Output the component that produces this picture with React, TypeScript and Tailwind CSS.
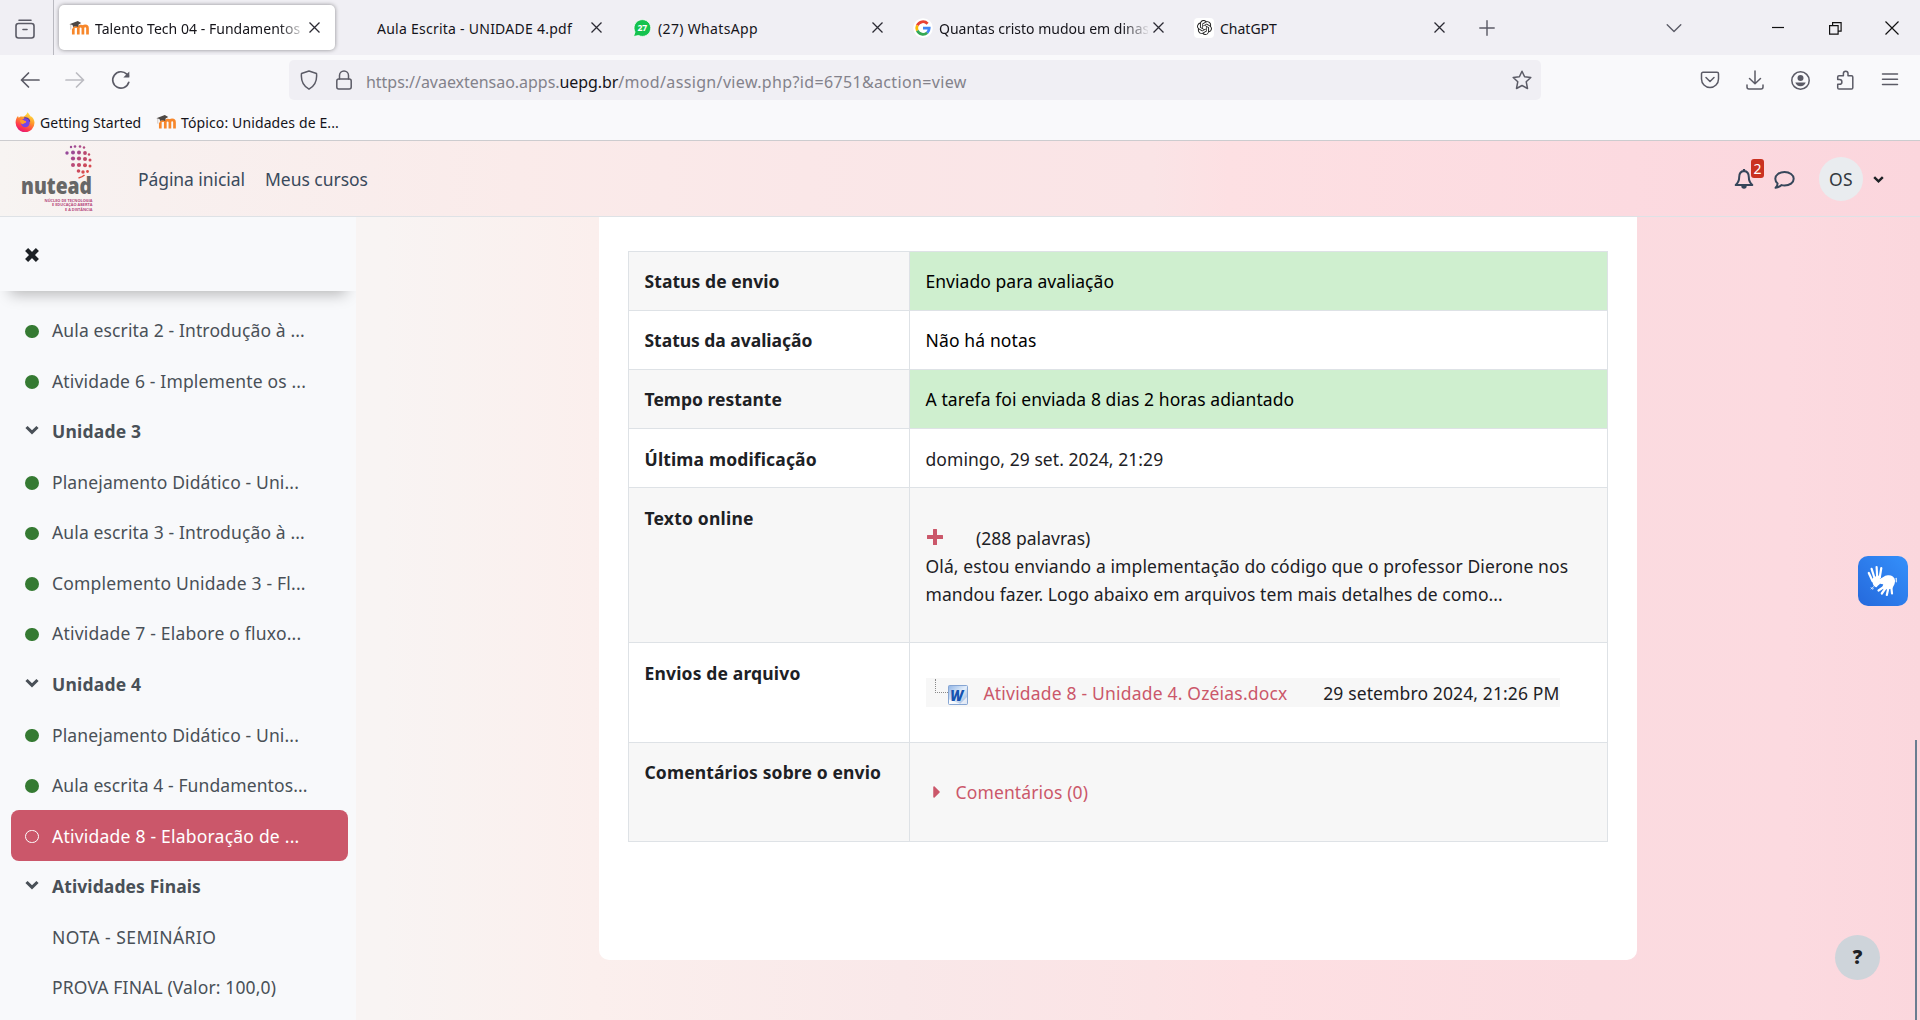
import type { ReactNode } from "react";
import { FaCaretRight } from "react-icons/fa";
import { SiOpenai } from "react-icons/si";

/* ---------- Icons ---------- */

function MoodleIcon() {
  return (
    <svg viewBox="0 0 20 20" className="size-5 shrink-0">
      <path d="M4.2 16V10.6M9.2 16V10.2a2.3 2.3 0 0 1 4.6-.4V16M13.8 16V9.8a2.3 2.3 0 0 1 4.6 0V16" transform="translate(0.1 .4)" fill="none" stroke="#f7872b" strokeWidth="2.7" />
      <path d="M4.2 11.2a3 3 0 0 1 4.6-1.8" fill="none" stroke="#f7872b" strokeWidth="2" />
      <path d="M.4 6.3 8.8 3l3.4 2-2.6 1.4-.5 2.6c-1.6-1.2-3.5-1-5-.1L3.5 7z" fill="#4c4744" />
      <path d="M1.8 6.6v5" stroke="#bfb3aa" strokeWidth=".7" />
    </svg>
  );
}

function WhatsAppIcon() {
  return (
    <svg viewBox="0 0 20 20" className="size-5 shrink-0">
      <path d="M1.5 18.5 3 14A8.4 8.4 0 1 1 6.6 17.5z" fill="#14c24e" stroke="#fff" strokeWidth=".8" />
      <text x="10.3" y="13" textAnchor="middle" fontSize="8.6" fontWeight="700" fill="#fff" fontFamily="Open Sans, sans-serif">27</text>
    </svg>
  );
}

function GoogleIcon() {
  return (
    <svg viewBox="0 0 20 20" className="size-5 shrink-0">
      <circle cx="10" cy="10" r="9.8" fill="#fff" />
      <g fill="none" strokeWidth="2.8">
        <path d="M14.6 5.700A6.300 6.300 0 0 0 4.300 7.300" stroke="#ea4335" />
        <path d="M4.300 7.300a6.300 6.300 0 0 0 0 5.400" stroke="#fbbc05" />
        <path d="M4.300 12.700a6.300 6.300 0 0 0 9.900 2" stroke="#34a853" />
        <path d="M14.200 14.700A6.300 6.300 0 0 0 16.200 10.200H10" stroke="#4285f4" />
      </g>
    </svg>
  );
}

function ChatGptIcon() {
  return (
    <span className="flex size-5 items-center justify-center rounded-[4px] bg-white">
      <SiOpenai className="size-[15px] text-[#222]" />
    </span>
  );
}

function FirefoxIcon() {
  return (
    <svg viewBox="0 0 20 20" className="size-5 shrink-0">
      <defs>
        <linearGradient id="ff" x1=".8" y1="0" x2=".3" y2="1">
          <stop offset="0" stopColor="#fff04a" />
          <stop offset=".4" stopColor="#ff9a2a" />
          <stop offset=".75" stopColor="#ff3c4a" />
          <stop offset="1" stopColor="#e3127c" />
        </linearGradient>
      </defs>
      <path d="M12.500.3c1.200 1.600 2.500 2.700 3.200 4.200 1-.2 3.800 2.400 3.800 6.300a9.400 9.400 0 0 1-18.900 0C.6 8 1.500 5.600 3 4l.7 1.800C5 4.600 6 4.300 7.500 4.600 9.500 4.900 11.500 3 12.500.3z" fill="url(#ff)" />
      <circle cx="10.3" cy="10.8" r="4.4" fill="#7543e8" />
      <path d="M5 8.200c2-.9 3.600-.3 4.600.6 1.200 0 1.800.7 1.500 1.400-1 1.400-2.600.8-3.300 2-1.800-.5-2.800-2-2.800-4z" fill="#ff9a2a" />
      <path d="M9 6c3-.8 5.300 1 5.700 3.600" fill="none" stroke="#4b2fb5" strokeWidth="1.2" />
    </svg>
  );
}

function Stroke({ d, size = "size-5", w = 1.5, color = "#5b5b66", children }: { d?: string; size?: string; w?: number; color?: string; children?: ReactNode }) {
  return (
    <svg viewBox="0 0 20 20" className={`${size} shrink-0`} fill="none" stroke={color} strokeWidth={w} strokeLinecap="round" strokeLinejoin="round">
      {d && <path d={d} />}
      {children}
    </svg>
  );
}

function CloseIcon() {
  return (
    <svg viewBox="0 0 11 11" className="size-[11px] shrink-0" stroke="#2b2a33" strokeWidth="1.3">
      <path d="M.5.5 10.5 10.5M10.5.5.5 10.5" />
    </svg>
  );
}

function Chevron({ className }: { className: string }) {
  return (
    <svg viewBox="0 0 14 14" className={className} fill="none" stroke="currentColor" strokeWidth="3.1">
      <path d="M1.500 4 7 9.400 12.500 4" />
    </svg>
  );
}

function Cross() {
  return (
    <svg viewBox="0 0 14 14" className="size-[14px]" stroke="#1d2125" strokeWidth="4.300" strokeLinecap="butt">
      <path d="M1.600 1.600 12.400 12.400M12.400 1.600 1.600 12.400" strokeLinejoin="round" />
    </svg>
  );
}

function Plus() {
  return (
    <svg viewBox="0 0 16 16" className="size-4" fill="#cb576a">
      <path d="M6.500 0h3a.5.5 0 0 1 .5.5V6h5.500a.5.5 0 0 1 .5.5v3a.5.5 0 0 1-.5.5H10v5.500a.5.5 0 0 1-.5.5h-3a.5.5 0 0 1-.5-.5V10H.5a.5.500 0 0 1-.5-.5v-3A.5.5 0 0 1 .5 6H6V.5a.5.5 0 0 1 .5-.5z" />
    </svg>
  );
}

function Bell() {
  return (
    <svg viewBox="0 0 20 20" className="size-5" fill="none" stroke="#36465a" strokeWidth="2" strokeLinejoin="round">
      <path d="M10 2C6.500 2.300 5.200 5 5.200 8c0 4-1.300 6-3.500 8h16.600c-2.200-2-3.500-4-3.500-8 0-3-1.300-5.700-4.800-6z" />
      <path d="M10 0v2" strokeWidth="2.200" />
      <path d="M7.300 17a2.700 2.700 0 0 0 5.400 0z" fill="#36465a" stroke="none" />
    </svg>
  );
}

function Bubble() {
  return (
    <svg viewBox="0 0 22 18" className="h-[18px] w-[22px]" fill="none" stroke="#36465a" strokeWidth="2" strokeLinejoin="round">
      <path d="M11.500 1.100c5.200 0 9.200 2.900 9.200 6.700s-4 6.700-9.200 6.700c-1 0-2-.1-2.900-.4-1.600 1.500-3.400 2.400-6 2.700 1.300-1.400 1.900-2.700 2-4.300-1.500-1.200-2.300-2.800-2.300-4.700 0-3.800 4-6.700 9.200-6.700z" />
    </svg>
  );
}

function NuteadLogo() {
  const dots: [number, number, number, string][] = [
    [50, 2, 1.2, "#9c4a94"], [54, 1.5, 1.3, "#a14a90"], [59, 1.5, 1.3, "#a94a88"], [63, 2.5, 1.2, "#b24a80"],
    [46, 8, 1.7, "#97499a"], [52, 7.5, 2, "#9c4a94"], [58, 7.5, 2, "#a94a88"], [64, 8, 1.9, "#b9486f"], [68, 9.5, 1.2, "#c44a68"],
    [52, 13.5, 2.1, "#a8488a"], [58, 13.5, 2.1, "#b4487a"], [64, 14, 2, "#c04a68"], [69, 15, 1.5, "#cc4a5c"],
    [52, 20, 2, "#b94a78"], [58, 20, 2.1, "#c2496a"], [64, 20.3, 2, "#cc4a5c"], [69, 21, 1.5, "#d64b50"],
    [57.5, 26, 1.8, "#cc4a5c"], [62, 27, 1.7, "#d64b50"], [66.5, 26.5, 1.4, "#de4c48"],
  ];
  return (
    <svg viewBox="-4 0 80 72" className="h-[72px] w-[80px] shrink-0">
      {dots.map(([x, y, r, c]) => <circle key={`${x}-${y}`} cx={x} cy={y} r={r} fill={c} />)}
      <path d="M57.5 33c2-.5 4.500-1.500 6-3" stroke="#e04c40" strokeWidth="1.5" fill="none" />
      <text x="0" y="48.500" fontSize="22" fontWeight="800" textLength="71" lengthAdjust="spacingAndGlyphs" fill="#676767" fontFamily="Open Sans, sans-serif">nutead</text>
      <g fontSize="4.2" fontWeight="700" fill="#b5487c" fontFamily="Open Sans, sans-serif">
        <text x="23.500" y="56.5" textLength="48" lengthAdjust="spacingAndGlyphs">NÚCLEO DE TECNOLOGIA</text>
        <text x="31" y="61" textLength="40.500" lengthAdjust="spacingAndGlyphs">E EDUCAÇÃO ABERTA</text>
        <text x="44" y="65.5" textLength="27.500" lengthAdjust="spacingAndGlyphs">E A DISTÂNCIA</text>
      </g>
    </svg>
  );
}

function HandsIcon() {
  return (
    <svg viewBox="0 0 50 50" className="size-[50px]" stroke="#fff" strokeLinecap="round" strokeLinejoin="round" fill="none">
      <path d="M14.500 25 10.800 17M16.500 22 13.600 12.800M19.200 21 18.600 11M21.800 21 23.300 12" strokeWidth="2.200" />
      <path d="M14.800 23.500c2-3 6-3.500 7.500-2.500l-2 2.500-1.300 1.500 3 2-3 2.500-.8 1c-2-.8-3.200-3.500-3.400-7z" fill="#fff" strokeWidth="1.500" />
      <path d="M25 31.500 20.500 34.500M27.300 32.500 23.800 37.500M30.300 32.500 28.800 39M33.300 31 34 37.500" strokeWidth="2.200" />
      <path d="M19.800 23.800c4 .8 6-3.200 9.500-3.700 4-.7 7.200 1.500 7 4.800 0 3-1.400 4.500-2.500 7l-5 .5-4-.5 1.500-4.500c-2.500.3-5.500-1-6.500-3.600z" fill="#fff" strokeWidth="1.500" />
      <path d="M13 31.500l1.500 1.500M15.500 30.500l-2.500 2.500M15.500 32l-.8 1.200" strokeWidth="1" opacity=".7" />
      <path d="M38.300 22.300v3.500" strokeWidth="1.300" opacity=".8" />
    </svg>
  );
}

/* ---------- Browser window ---------- */

function Tab({ icon, title, track, active, fade }: { icon?: ReactNode; title: string; track: string; active?: boolean; fade?: boolean }) {
  return (
    <div className={`flex h-[45px] w-[276px] shrink-0 items-center rounded-[5px] ${active ? "bg-white pl-[10px] shadow-[0_0_4px_rgba(0,0,0,0.42)]" : "pl-[11px]"}`}>
      <span className="mr-[6px] flex size-5 shrink-0 items-center justify-center">{icon}</span>
      <span className={`w-[209px] shrink-0 overflow-hidden whitespace-nowrap pt-[2px] text-sm ${track} ${fade ? "[mask-image:linear-gradient(to_right,black_88%,transparent_101%)]" : ""}`}>{title}</span>
      <span className="ml-[5px] flex size-[11px] items-center">
        <CloseIcon />
      </span>
    </div>
  );
}

function TabBar() {
  return (
    <div className="flex h-[55px] items-center bg-[#f0eff4]">
      <div className="flex h-full w-[54px] shrink-0 items-center border-r border-[#b9b9c0] pl-[15px] pt-[2px]">
        <svg viewBox="0 0 20 20" className="size-5" fill="none" stroke="#5b5b66" strokeWidth="1.6" strokeLinecap="round">
          <path d="M4 1.200h12" />
          <rect x="1" y="4.5" width="18" height="14.5" rx="2.5" />
          <path d="M8 10.5h4" />
        </svg>
      </div>
      <div className="flex gap-[5px] pl-[5px]">
        <Tab active fade icon={<MoodleIcon />} title="Talento Tech 04 - Fundamentos" track="tracking-[0.03px]" />
        <Tab title="Aula Escrita - UNIDADE 4.pdf" track="tracking-[0.25px]" />
        <Tab icon={<WhatsAppIcon />} title="(27) WhatsApp" track="tracking-[0.34px]" />
        <Tab fade icon={<GoogleIcon />} title="Quantas cristo mudou em dinas" track="tracking-[-0.01px]" />
        <Tab icon={<ChatGptIcon />} title="ChatGPT" track="tracking-normal" />
      </div>
      <div className="flex grow items-center pl-[20px] pr-[21px] pt-[1px]">
        <Stroke size="size-4" w={1.8} d="M10 1v18M1 10h18" />
        <span className="grow" />
        <Stroke size="size-4" w={1.7} d="M1.500 6 10 14.500 18.500 6" />
        <svg viewBox="0 0 13 13" className="ml-[90px] size-[13px]" stroke="#111" strokeWidth="1.2">
          <path d="M0 5.500h12" />
        </svg>
        <svg viewBox="0 0 13 13" className="ml-[44px] size-[13px]" fill="none" stroke="#111" strokeWidth="1.2">
          <path d="M.6 3.600h8.500v8.500H.6zM3.600 3.600V.6h8.500v8.500h-3" />
        </svg>
        <svg viewBox="0 0 14 14" className="ml-[43px] size-[14px]" stroke="#111" strokeWidth="1.2">
          <path d="M.5.5l13 13M13.500.5l-13 13" />
        </svg>
      </div>
    </div>
  );
}

function NavBar() {
  return (
    <div className="flex h-[50px] items-center pl-5 pr-[20px]">
      <Stroke d="M19 10H1.500M8.500 3 1.500 10l7 7" w={1.7} />
      <span className="ml-[25px] flex">
        <Stroke d="M1 10h17.500M11.500 3l7 7-7 7" w={1.7} color="#bcbcc2" />
      </span>
      <span className="ml-[26px] flex">
        <Stroke w={1.7}>
          <path d="M17.800 12.300A8.200 8.200 0 1 1 15.800 4.200L17.500 6" />
          <path d="M18.300 1.500v6h-6z" fill="#5b5b66" stroke="none" />
        </Stroke>
      </span>
      <div className="ml-[158px] flex h-[40px] w-[1252px] shrink-0 items-center rounded-[5px] bg-[#f0eff4] pl-[10px] pr-[9px]">
        <Stroke d="M10 1 17.500 3.500C18.300 11 15 16.500 10 19.200 5 16.500 1.700 11 2.500 3.500z" />
        <span className="ml-[15px] flex">
          <Stroke>
            <rect x="2.8" y="9" width="14.4" height="10" rx="2" />
            <path d="M5.500 9V5.500a4.500 4.500 0 0 1 9 0V9" />
          </Stroke>
        </span>
        <p className="ml-[12px] grow whitespace-nowrap pt-[3px] text-base text-[#83828b]">
          <span className="tracking-[-0.03px]">https://avaextensao.apps.</span>
          <span className="tracking-[-0.1px] text-[#15141a]">uepg.br</span>
          <span className="tracking-[0.35px]">/mod/assign/view.php?id=6751&amp;action=view</span>
        </p>
        <Stroke d="M10 1.200l2.600 5.600 6.200.7-4.600 4.200 1.300 6.800L10 15.500l-5.500 3 1.300-6.800L1.200 7.500l6.200-.7z" />
      </div>
      <div className="flex grow items-center justify-between pl-[159px]">
        <Stroke d="M3 2.300h14a1.500 1.500 0 0 1 1.500 1.500V9a8.500 8.500 0 0 1-17 0V3.800A1.500 1.500 0 0 1 3 2.300zM6 7.500l4 4 4-4" />
        <Stroke d="M10 1v12.500M4.500 8.500l5.500 5.300 5.500-5.300M2 15v2a2 2 0 0 0 2 2h12a2 2 0 0 0 2-2v-2" />
        <Stroke>
          <circle cx="10.5" cy="10.5" r="8.7" />
          <circle cx="10.5" cy="8.1" r="3" fill="#5b5b66" stroke="none" />
          <path d="M5.300 12.500h10.400a5.500 5.500 0 0 1-10.400 0z" fill="#5b5b66" stroke="none" />
        </Stroke>
        <Stroke d="M4 19h12.500a1.300 1.300 0 0 0 1.300-1.300V7A1.300 1.300 0 0 0 16.500 5.700H13V3.500a2.300 2.300 0 0 0-4.600 0v2.200H4A1.300 1.300 0 0 0 2.700 7v2.500H4.500a2.300 2.300 0 0 1 0 4.800H2.700v3.400A1.300 1.300 0 0 0 4 19z" />
        <Stroke d="M2.500 4h15M2.500 9.300h15M2.500 14.600h15" />
      </div>
    </div>
  );
}

function BookmarksBar() {
  return (
    <div className="flex h-[36px] items-center border-b border-[#cccccf] pb-[2px] pl-[15px] text-sm text-[#15141a]">
      <FirefoxIcon />
      <span className="ml-[5px] w-[116px] whitespace-nowrap pt-[2px] tracking-[0.04px]">Getting Started</span>
      <MoodleIcon />
      <span className="ml-[5px] whitespace-nowrap pt-[2px] tracking-[0.12px]">Tópico: Unidades de E...</span>
    </div>
  );
}

/* ---------- Site ---------- */

function SiteHeader() {
  return (
    <header className="flex h-[76px] shrink-0 items-center border-b border-[#dee2e6] bg-[linear-gradient(90deg,#f7f4f2_0%,#f8f0ef_8%,#faebea_27%,#fae7e8_42%,#fae4e6_60%,#fde0e3_64%,#fcdae0_85%,#fbd6dd_100%)] pl-[17px] text-[17.5px] text-[#3a4a5c]">
      <span className="flex pt-[5px]">
        <NuteadLogo />
      </span>
      <a className="ml-[41px] w-[127px] pt-[2px] tracking-[-0.08px]">Página inicial</a>
      <a className="grow pt-[2px] tracking-[-0.03px]">Meus cursos</a>
      <div className="relative flex pt-[1px]">
        <Bell />
        <span className="absolute -top-[9px] left-[17px] flex h-[19px] w-[13px] items-center justify-center rounded-[3px] bg-[#ca3120] text-[14px] leading-none text-white">2</span>
      </div>
      <span className="ml-[19px] flex pt-[3px]">
        <Bubble />
      </span>
      <span className="ml-[24px] flex size-[44px] items-center justify-center rounded-full bg-[#e9ecef] pt-[2px] tracking-[0.4px] text-[#343a40]">OS</span>
      <span className="ml-[10px] mr-[36px] flex pt-[2px] text-[#1d2125]">
        <Chevron className="size-[11px]" />
      </span>
    </header>
  );
}

type Item = { kind: "done" | "section" | "active" | "plain"; label: string; track: string };

const items: Item[] = [
  { kind: "done", label: "Aula escrita 2 - Introdução à ...", track: "tracking-[0.13px]" },
  { kind: "done", label: "Atividade 6 - Implemente os ...", track: "tracking-[0.17px]" },
  { kind: "section", label: "Unidade 3", track: "tracking-[0.2px]" },
  { kind: "done", label: "Planejamento Didático - Uni...", track: "tracking-[0.13px]" },
  { kind: "done", label: "Aula escrita 3 - Introdução à ...", track: "tracking-[0.13px]" },
  { kind: "done", label: "Complemento Unidade 3 - Fl...", track: "tracking-[0.2px]" },
  { kind: "done", label: "Atividade 7 - Elabore o fluxo...", track: "tracking-[0.21px]" },
  { kind: "section", label: "Unidade 4", track: "tracking-[0.2px]" },
  { kind: "done", label: "Planejamento Didático - Uni...", track: "tracking-[0.13px]" },
  { kind: "done", label: "Aula escrita 4 - Fundamentos...", track: "tracking-[0.1px]" },
  { kind: "active", label: "Atividade 8 - Elaboração de ...", track: "tracking-[0.22px]" },
  { kind: "section", label: "Atividades Finais", track: "tracking-[0.1px]" },
  { kind: "plain", label: "NOTA - SEMINÁRIO", track: "tracking-[0.47px]" },
  { kind: "plain", label: "PROVA FINAL (Valor: 100,0)", track: "tracking-[0.14px]" },
];

function Sidebar() {
  return (
    <aside className="flex w-[356px] shrink-0 flex-col overflow-hidden bg-[#f8f9fb]">
      <div className="flex h-[74px] shrink-0 items-center bg-[#f8f9fb] pl-[25px] pt-[2px] shadow-[0_13px_14px_-10px_rgba(0,0,0,0.28)]">
        <Cross />
      </div>
      <nav className="flex shrink-0 flex-col pl-[11px] pr-[8px] pt-[14px]">
        {items.map((it, i) => (
          <div
            key={i}
            className={`flex h-[50.55px] shrink-0 items-center whitespace-nowrap rounded-[8px] pl-[14px] text-[17.5px] ${
              it.kind === "active" ? "bg-[#cb576a] text-white" : "text-[#495057]"
            } ${it.kind === "section" ? "font-bold" : ""}`}
          >
            <span className="mr-[13px] flex w-[14px] shrink-0 justify-center">
              {it.kind === "done" && <span className="mt-[2px] size-[13.5px] rounded-full bg-[#357a32]" />}
              {it.kind === "active" && <span className="mt-[2px] size-[13.5px] rounded-full border-[1.5px] border-white" />}
              {it.kind === "section" && <Chevron className="mb-[2px] size-[14px]" />}
            </span>
            <span className={it.track}>{it.label}</span>
          </div>
        ))}
      </nav>
    </aside>
  );
}

function Row({ h, label, track, striped, green, raised, children }: { h: string; label: string; track: string; striped?: boolean; green?: boolean; raised?: boolean; children: ReactNode }) {
  const pad = raised ? "pt-[15px]" : "pt-[16px]";
  return (
    <tr className={`${h} ${striped ? "bg-[#f7f7f7]" : "bg-white"}`}>
      <th className={`border border-[#dee2e6] pl-[15.5px] text-left align-top font-bold leading-[28px] ${pad} ${track}`}>{label}</th>
      <td className={`border border-[#dee2e6] pl-[15.5px] align-top leading-[28px] ${pad} ${green ? "bg-[#cfefcf]" : ""}`}>{children}</td>
    </tr>
  );
}

function SubmissionTable() {
  return (
    <table className="w-[980px] table-fixed border-collapse whitespace-nowrap text-[17.5px] text-[#1d2125]">
      <colgroup>
        <col className="w-[281px]" />
        <col />
      </colgroup>
      <tbody>
        <Row h="h-[59px]" striped green raised label="Status de envio" track="tracking-[0.07px]">
          <span className="tracking-[0.04px] text-black">Enviado para avaliação</span>
        </Row>
        <Row h="h-[59px]" raised label="Status da avaliação" track="tracking-[-0.03px]">
          <span className="tracking-[0.14px] text-black">Não há notas</span>
        </Row>
        <Row h="h-[59px]" striped green raised label="Tempo restante" track="tracking-[0.02px]">
          <span className="tracking-[0.08px] text-black">A tarefa foi enviada 8 dias 2 horas adiantado</span>
        </Row>
        <Row h="h-[59px]" label="Última modificação" track="tracking-[0.15px]">
          <span className="tracking-[0.06px]">domingo, 29 set. 2024, 21:29</span>
        </Row>
        <Row h="h-[155px]" striped label="Texto online" track="tracking-[0.2px]">
          <div className="flex items-center pt-[20px]">
            <span className="ml-[1.500px] mr-[33px] flex pb-[2px]">
              <Plus />
            </span>
            <span className="tracking-[0.03px]">(288 palavras)</span>
          </div>
          <p className="tracking-[0.1px]">Olá, estou enviando a implementação do código que o professor Dierone nos</p>
          <p className="tracking-[0.07px]">mandou fazer. Logo abaixo em arquivos tem mais detalhes de como...</p>
        </Row>
        <Row h="h-[100px]" label="Envios de arquivo" track="tracking-[0.16px]">
          <div className="mt-[19px] flex h-[29px] w-[634px] items-center bg-[#f7f7f7]">
            <span className="ml-[9px] mb-[13px] h-[14px] w-[14px] border-b border-l border-dotted border-[#8a8a8a]" />
            <svg viewBox="0 0 20 20" className="mt-[5px] size-5">
              <defs>
                <linearGradient id="doc" x1="0" y1="0" x2="1" y2="1">
                  <stop offset="0" stopColor="#8fb4e6" />
                  <stop offset=".5" stopColor="#e3eefb" />
                  <stop offset="1" stopColor="#8facd8" />
                </linearGradient>
              </defs>
              <rect x=".5" y=".5" width="19" height="19" rx="1" fill="url(#doc)" stroke="#86a5d3" />
              <path d="M1 14.500 13 19H1z" fill="#fff" opacity=".8" />
              <path d="M12 19 19 12v7z" fill="#fff" opacity=".7" />
              <text x="8.8" y="15.5" textAnchor="middle" fontSize="15" fontStyle="italic" fontWeight="800" textLength="13" lengthAdjust="spacingAndGlyphs" fill="#1553b0" fontFamily="Open Sans, sans-serif">W</text>
            </svg>
            <a className="ml-[15px] w-[340px] tracking-[0.19px] text-[#cb576a]">Atividade 8 - Unidade 4. Ozéias.docx</a>
            <span className="tracking-[0.12px]">29 setembro 2024, 21:26 PM</span>
          </div>
        </Row>
        <Row h="h-[99px]" striped raised label="Comentários sobre o envio" track="tracking-[0.14px]">
          <div className="flex items-center pt-[20px] text-[#cb576a]">
            <FaCaretRight className="ml-[1px] mr-[9px] h-[20px] w-[20px]" />
            <span className="tracking-[0.13px]">Comentários (0)</span>
          </div>
        </Row>
      </tbody>
    </table>
  );
}

export default function App() {
  return (
    <div className="relative flex h-[1020px] w-[1920px] flex-col overflow-hidden bg-[#f9f9fb] font-['Noto_Sans','Open_Sans',sans-serif] text-[#15141a]">
      <TabBar />
      <NavBar />
      <BookmarksBar />
      <SiteHeader />
      <div className="flex min-h-0 grow bg-[linear-gradient(90deg,#f7f4f3_0%,#f8f4f3_20%,#fbefed_31%,#f9e8e9_47%,#fbe3e5_60%,#fde0e3_65%,#fbdbe0_83%,#fcdae0_93%,#fbd7dd_100%)]">
        <Sidebar />
        <main className="ml-[243px] h-[743px] w-[1038px] rounded-b-[10px] bg-white pl-[29px] pt-[34px]">
          <SubmissionTable />
        </main>
      </div>

      <div className="absolute right-[12px] top-[556px] rounded-[10px] bg-[linear-gradient(45deg,#2569dc,#3490fb)]">
        <HandsIcon />
      </div>
      <div className="absolute right-[40px] top-[935px] flex size-[45px] items-center justify-center rounded-full bg-[#ced4da] font-['Open_Sans',sans-serif] text-[19px] font-extrabold text-[#1d2125]">?</div>
      <div className="absolute bottom-0 right-[3px] h-[280px] w-[2px] bg-[#6a7d90]" />
    </div>
  );
}
